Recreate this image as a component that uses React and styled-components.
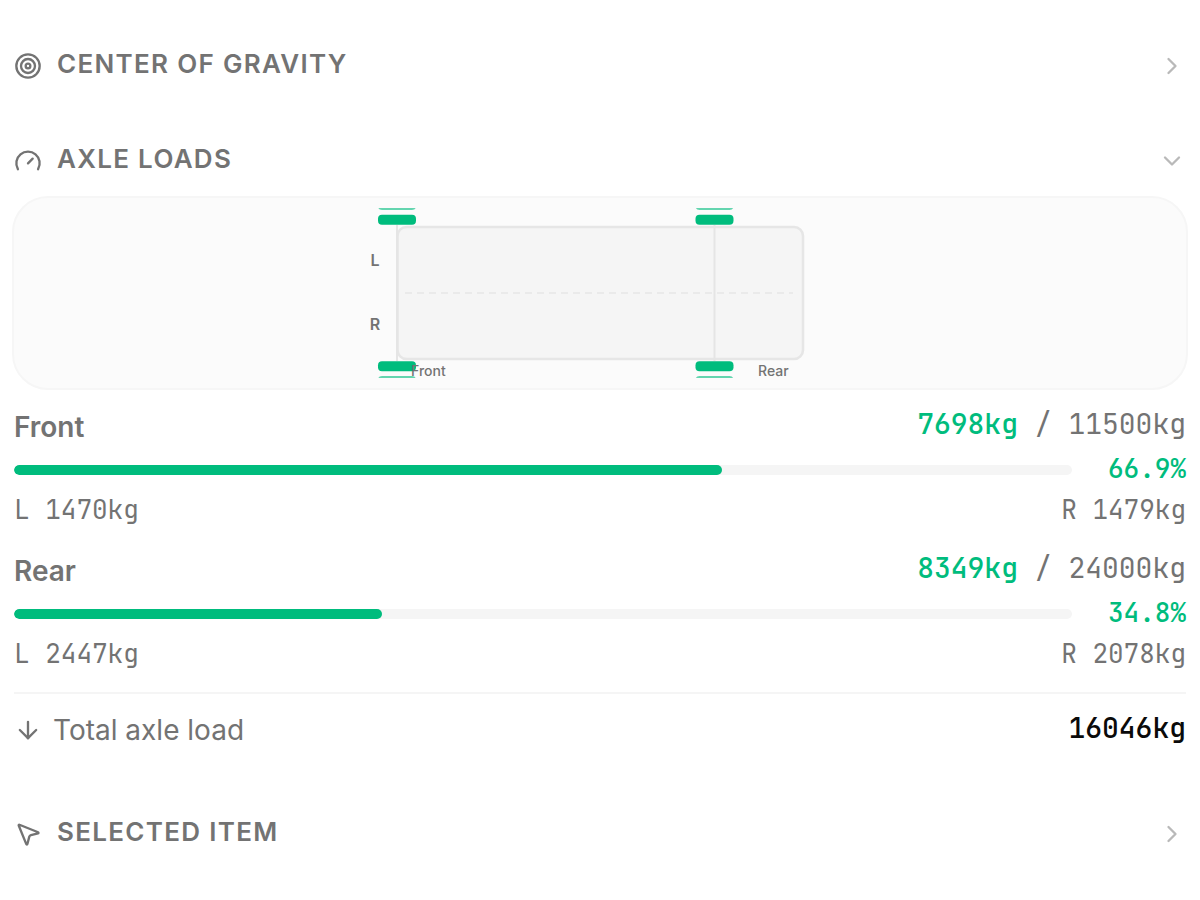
import React, { useState } from 'react';
import styled, { createGlobalStyle } from 'styled-components';
import { ArrowDown, ChevronDown, ChevronRight, MousePointer2, Target } from 'lucide-react';

const GlobalStyle = createGlobalStyle`
  * {
    box-sizing: border-box;
  }

  body {
    margin: 0;
    background: #fff;
    color: #737373;
    font-family: Inter, 'Liberation Sans', sans-serif;
  }
`;

const mono = `'JetBrains Mono', 'DejaVu Sans Mono', 'Liberation Mono', monospace`;

const Sidebar = styled.main`
  display: flex;
  flex-direction: column;
  gap: 55px;
  padding: 46px 12px;
`;

const Heading = styled.h2`
  margin: 0;
  padding: 0 2px;
`;

const Toggle = styled.button`
  display: flex;
  align-items: center;
  gap: 15px;
  width: 100%;
  height: 40px;
  padding: 0;
  border: none;
  background: none;
  color: inherit;
  font: inherit;
  cursor: pointer;

  svg {
    flex: none;
  }
`;

const Title = styled.span`
  flex: 1;
  padding-bottom: 4px;
  font-size: 26px;
  font-weight: 600;
  line-height: 32px;
  letter-spacing: 0.05em;
  text-align: left;
  text-transform: uppercase;
`;

const Chevron = styled.span`
  display: flex;
  color: #b9b9b9;
`;

const Diagram = styled.div`
  display: flex;
  justify-content: center;
  margin-top: 15px;
  padding: 10px;
  border: 2px solid #f6f6f6;
  border-radius: 36px;
  background: #fbfbfb;

  svg {
    display: block;
    font-family: Inter, 'Liberation Sans', sans-serif;
  }
`;

const Axles = styled.div`
  display: flex;
  flex-direction: column;
  gap: 22px;
  padding: 16px 2px 20px;
`;

const Axle = styled.section`
  display: flex;
  flex-direction: column;
  gap: 5px;
`;

const Row = styled.div`
  display: flex;
  align-items: center;
  justify-content: space-between;
`;

const AxleName = styled.h3`
  margin: 0;
  font-size: 28px;
  font-weight: 600;
  line-height: 42px;
`;

const Load = styled.span`
  align-self: flex-start;
  font-family: ${mono};
  font-size: 28px;
  line-height: 36px;
  white-space: pre;
`;

const Current = styled.span`
  color: #00bc7d;
  font-weight: 500;
`;

const BarRow = styled.div`
  display: flex;
  align-items: center;
`;

const Track = styled.div`
  flex: 1;
  height: 10px;
  border-radius: 5px;
  background: #f5f5f5;
  overflow: hidden;
`;

const Fill = styled.div`
  height: 100%;
  border-radius: 5px;
  background: #00bc7d;
`;

const Percent = styled.span`
  width: 114px;
  padding-bottom: 2px;
  color: #00bc7d;
  font-family: ${mono};
  font-size: 26px;
  font-weight: 500;
  line-height: 32px;
  text-align: right;
`;

const Side = styled.span`
  font-family: ${mono};
  font-size: 26px;
  line-height: 36px;
`;

const Total = styled.div`
  display: flex;
  align-items: center;
  margin: 0 2px 9px;
  padding-top: 16px;
  border-top: 2px solid #f5f5f5;
`;

const TotalLabel = styled.span`
  flex: 1;
  padding-left: 11px;
  font-size: 28px;
  line-height: 40px;
`;

const TotalValue = styled(Load)`
  color: #0a0a0a;
  font-weight: 500;
`;

const GaugeIcon = () => (
  <svg width="28" height="28" viewBox="0 0 24 24" fill="none" stroke="currentColor" strokeWidth="2" strokeLinecap="round" strokeLinejoin="round">
    <path d="m12 14 4-4" />
    <path d="M3.34 19a10 10 0 1 1 17.32 0" />
  </svg>
);

const axles = [
  { name: 'Front', load: 7698, max: 11500, percent: 66.9, left: 1470, right: 1479 },
  { name: 'Rear', load: 8349, max: 24000, percent: 34.8, left: 2447, right: 2078 },
];

// Top view of the trailer, wheels are drawn per axle position
const AxleDiagram = () => (
  <svg width="480" height="170" viewBox="0 0 480 170">
    <rect x="37.5" y="19" width="405.5" height="132" rx="9" fill="#f5f5f5" stroke="#e6e6e6" strokeWidth="2.6" />
    <line x1="45" y1="85" x2="433" y2="85" stroke="#eaeaea" strokeWidth="2" strokeDasharray="7 5" />
    {[37, 354.5].map((x) => (
      <g key={x}>
        <line x1={x} y1="17" x2={x} y2="153" stroke="#e5e5e5" strokeWidth="2" />
        <g fill="#00bc7d">
          <rect x={x - 19} y="-8" width="38" height="10" rx="4" opacity="0.6" />
          <rect x={x - 19} y="6.7" width="38" height="10" rx="4" />
          <rect x={x - 19} y="153.3" width="38" height="10" rx="4" />
          <rect x={x - 19} y="168" width="38" height="10" rx="4" opacity="0.6" />
        </g>
      </g>
    ))}
    <g fill="#737373" fontSize="16" fontWeight="600" textAnchor="middle">
      <text x="15" y="58">L</text>
      <text x="15" y="122">R</text>
    </g>
    <g fill="#737373" fontSize="14" fontWeight="500">
      <text x="51" y="168">Front</text>
      <text x="398" y="168">Rear</text>
    </g>
  </svg>
);

const Section = ({ icon, title, defaultOpen = false, children }) => {
  const [open, setOpen] = useState(defaultOpen);

  return (
    <section>
      <Heading>
        <Toggle type="button" aria-expanded={open} onClick={() => setOpen(!open)}>
          {icon}
          <Title>{title}</Title>
          <Chevron>{open ? <ChevronDown size={28} /> : <ChevronRight size={28} />}</Chevron>
        </Toggle>
      </Heading>
      {open && children}
    </section>
  );
};

const App = () => (
  <>
    <GlobalStyle />
    <Sidebar>
      <Section icon={<Target size={28} />} title="Center of gravity" />
      <Section icon={<GaugeIcon />} title="Axle loads" defaultOpen>
        <Diagram>
          <AxleDiagram />
        </Diagram>
        <Axles>
          {axles.map((axle) => (
            <Axle key={axle.name}>
              <Row>
                <AxleName>{axle.name}</AxleName>
                <Load>
                  <Current>{axle.load}kg</Current> / {axle.max}kg
                </Load>
              </Row>
              <BarRow>
                <Track>
                  <Fill style={{ width: `${axle.percent}%` }} />
                </Track>
                <Percent>{axle.percent}%</Percent>
              </BarRow>
              <Row>
                <Side>L {axle.left}kg</Side>
                <Side>R {axle.right}kg</Side>
              </Row>
            </Axle>
          ))}
        </Axles>
        <Total>
          <ArrowDown size={28} />
          <TotalLabel>Total axle load</TotalLabel>
          <TotalValue>16046kg</TotalValue>
        </Total>
      </Section>
      <Section icon={<MousePointer2 size={28} />} title="Selected item" />
    </Sidebar>
  </>
);

export default App;
